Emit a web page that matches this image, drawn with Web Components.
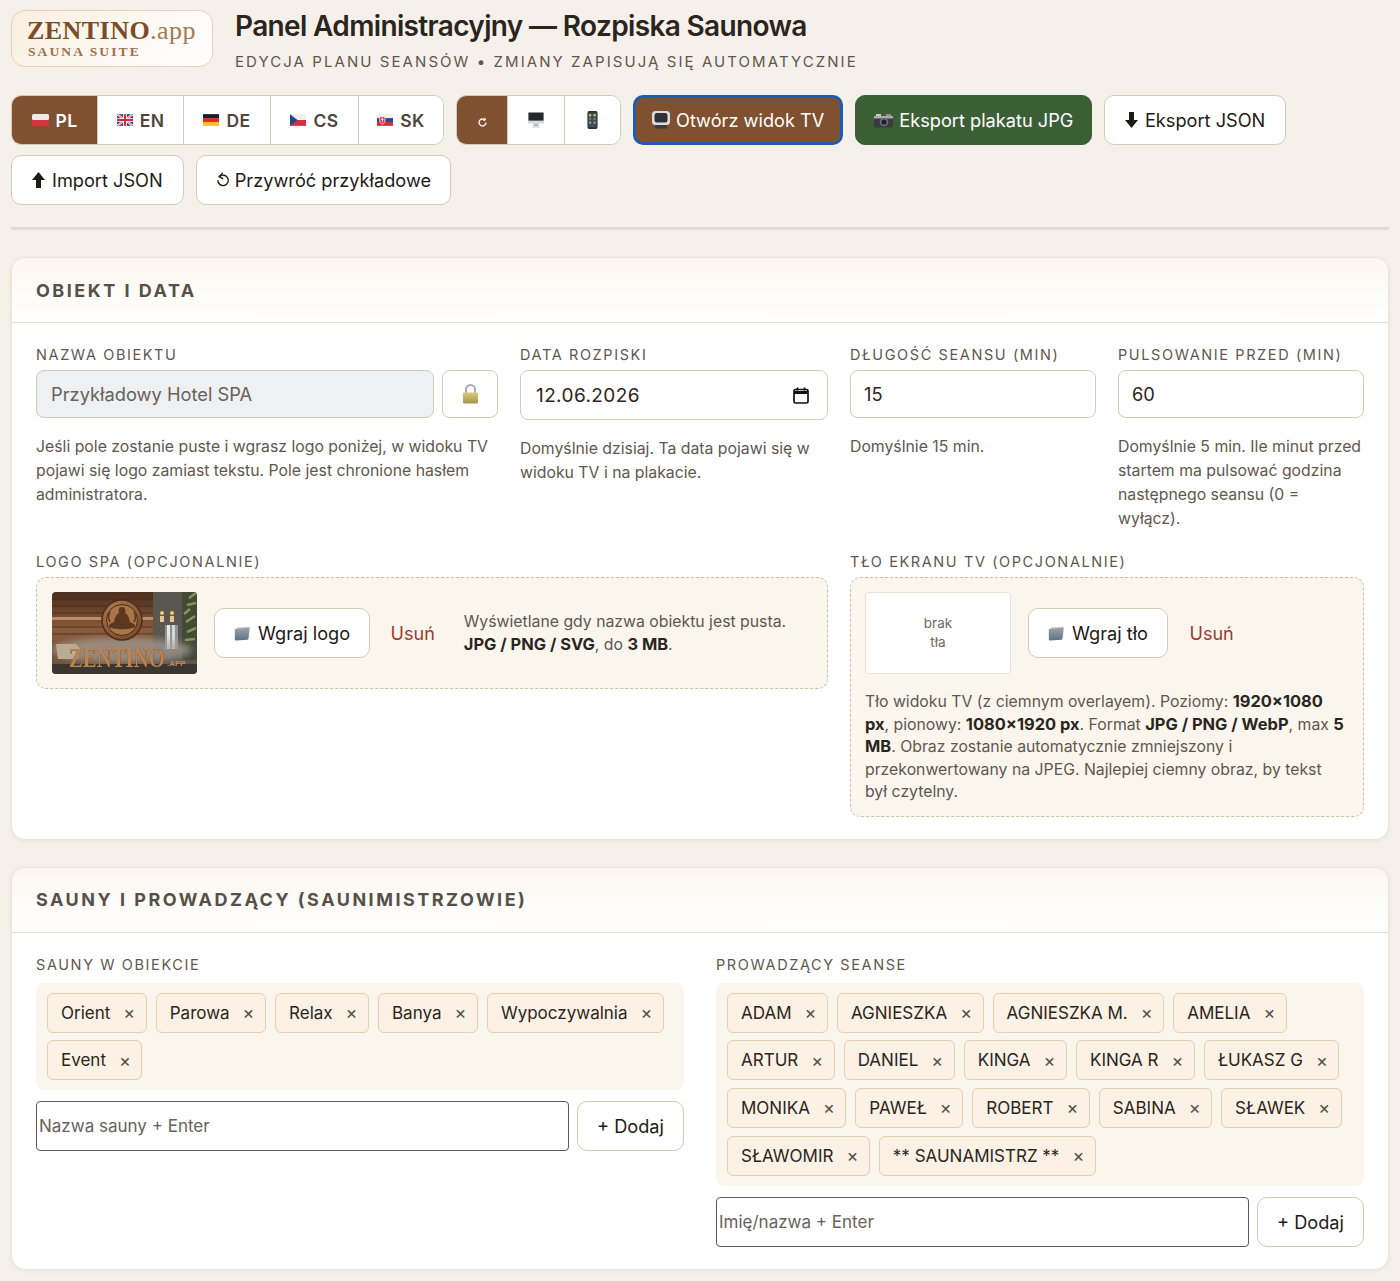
<!DOCTYPE html>
<html lang="pl">
<head>
<meta charset="utf-8">
<title>Panel Administracyjny</title>
<style>
  html, body { margin: 0; background: #f5f1ea; }
  body { font-family: Inter, "Liberation Sans", sans-serif; color: #2b2520; }
  b { font-weight: 700; color: #2b2520; font-size: 1.04em; line-height: 1; }
</style>
</head>
<body>
<admin-page>
  <page-header></page-header>
  <tool-bar>
    <seg-group>
      <seg-btn icon="pl" w="85" active>PL</seg-btn>
      <seg-btn icon="en" w="86">EN</seg-btn>
      <seg-btn icon="de" w="87">DE</seg-btn>
      <seg-btn icon="cs" w="88">CS</seg-btn>
      <seg-btn icon="sk" w="85">SK</seg-btn>
    </seg-group>
    <seg-group>
      <seg-btn icon="auto" w="50" active></seg-btn>
      <seg-btn icon="desktop" w="57"></seg-btn>
      <seg-btn icon="phone" w="56"></seg-btn>
    </seg-group>
    <act-btn kind="brown" icon="tv">Otwórz widok TV</act-btn>
    <act-btn kind="green" icon="camera">Eksport plakatu JPG</act-btn>
    <act-btn icon="down">Eksport JSON</act-btn>
    <act-btn icon="up" style="padding:0 20px">Import JSON</act-btn>
    <act-btn icon="undo" style="gap:5px;padding:0 19px">Przywróć przykładowe</act-btn>
  </tool-bar>
  <hr-line></hr-line>

  <form-card heading="Obiekt i data">
    <div style="display:grid;grid-template-columns:462px 308px 246px 246px;column-gap:22px;row-gap:22px">
      <form-field label="Nazwa obiektu">
        <div style="display:flex;gap:8px">
          <text-box locked style="flex:1">Przykładowy Hotel SPA</text-box>
          <lock-btn></lock-btn>
        </div>
        <span slot="help">Jeśli pole zostanie puste i wgrasz logo poniżej, w widoku TV pojawi się logo zamiast tekstu. Pole jest chronione hasłem administratora.</span>
      </form-field>
      <form-field label="Data rozpiski">
        <date-box>12.06.2026</date-box>
        <span slot="help">Domyślnie dzisiaj. Ta data pojawi się w widoku TV i na plakacie.</span>
      </form-field>
      <form-field label="Długość seansu (min)">
        <text-box>15</text-box>
        <span slot="help">Domyślnie 15 min.</span>
      </form-field>
      <form-field label="Pulsowanie przed (min)">
        <text-box>60</text-box>
        <span slot="help">Domyślnie 5 min. Ile minut przed startem ma pulsować godzina następnego seansu (0 = wyłącz).</span>
      </form-field>

      <form-field label="Logo SPA (opcjonalnie)" style="grid-column:span 2">
        <upload-box>
          <logo-thumb></logo-thumb>
          <act-btn small icon="folder">Wgraj logo</act-btn>
          <remove-link style="margin:0 12px 0 4px">Usuń</remove-link>
          <span slot="side">Wyświetlane gdy nazwa obiektu jest pusta.<br><b>JPG / PNG / SVG</b>, do <b>3 MB</b>.</span>
        </upload-box>
      </form-field>
      <form-field label="Tło ekranu TV (opcjonalnie)" style="grid-column:span 2">
        <upload-box>
          <empty-thumb>brak<br>tła</empty-thumb>
          <act-btn small icon="folder">Wgraj tło</act-btn>
          <remove-link style="margin-left:5px">Usuń</remove-link>
          <span slot="below">Tło widoku TV (z ciemnym overlayem). Poziomy: <b>1920×1080</b> <b>px</b>, pionowy: <b>1080×1920 px</b>. Format <b>JPG / PNG / WebP</b>, max <b>5</b> <b>MB</b>. Obraz zostanie automatycznie zmniejszony i przekonwertowany na JPEG. Najlepiej ciemny obraz, by tekst był czytelny.</span>
        </upload-box>
      </form-field>
    </div>
  </form-card>

  <form-card heading="Sauny i prowadzący (saunimistrzowie)">
    <div style="display:grid;grid-template-columns:1fr 1fr;column-gap:32px">
      <form-field label="Sauny w obiekcie" tight>
        <chip-list>
          <chip-item>Orient</chip-item><chip-item>Parowa</chip-item><chip-item>Relax</chip-item><chip-item>Banya</chip-item><chip-item>Wypoczywalnia</chip-item><chip-item>Event</chip-item>
        </chip-list>
        <add-row placeholder="Nazwa sauny + Enter"></add-row>
      </form-field>
      <form-field label="Prowadzący seanse" tight>
        <chip-list>
          <chip-item>ADAM</chip-item><chip-item>AGNIESZKA</chip-item><chip-item>AGNIESZKA M.</chip-item><chip-item>AMELIA</chip-item><chip-item>ARTUR</chip-item><chip-item>DANIEL</chip-item><chip-item>KINGA</chip-item><chip-item>KINGA R</chip-item><chip-item>ŁUKASZ G</chip-item><chip-item>MONIKA</chip-item><chip-item>PAWEŁ</chip-item><chip-item>ROBERT</chip-item><chip-item>SABINA</chip-item><chip-item>SŁAWEK</chip-item><chip-item>SŁAWOMIR</chip-item><chip-item>** SAUNAMISTRZ **</chip-item>
        </chip-list>
        <add-row placeholder="Imię/nazwa + Enter"></add-row>
      </form-field>
    </div>
  </form-card>
</admin-page>

<script>
// icons are drawn by hand, no emoji font here
const ICONS = {
  pl: `<svg width="17" height="12" viewBox="0 0 17 12"><rect width="17" height="6" rx="1.500" fill="#eeeaea"/><path d="M0 6h17v4.500a1.500 1.500 0 0 1-1.500 1.500h-14A1.500 1.500 0 0 1 0 10.500z" fill="#d8323f"/></svg>`,
  en: `<svg width="16" height="12" viewBox="0 0 15 11"><rect width="15" height="11" rx="1.500" fill="#2b3a83"/><path d="M0 0l15 11M15 0L0 11" stroke="#fff" stroke-width="2"/><path d="M0 0l15 11M15 0L0 11" stroke="#cf2b3c" stroke-width=".7"/><path d="M7.500 0v11M0 5.500h15" stroke="#fff" stroke-width="3.400"/><path d="M7.500 0v11M0 5.500h15" stroke="#cf2b3c" stroke-width="1.800"/></svg>`,
  de: `<svg width="16" height="12" viewBox="0 0 15 11"><rect width="15" height="3.700" fill="#1d1d1d"/><rect y="3.700" width="15" height="3.700" fill="#d62b2b"/><rect y="7.300" width="15" height="3.700" fill="#f3c225"/></svg>`,
  cs: `<svg width="16" height="12" viewBox="0 0 15 11"><rect width="15" height="5.500" fill="#f0eeee"/><rect y="5.500" width="15" height="5.500" fill="#d2303f"/><path d="M0 0l7 5.500L0 11z" fill="#21468f"/></svg>`,
  sk: `<svg width="16" height="12" viewBox="0 0 15 11"><rect width="15" height="3.700" fill="#f0eeee"/><rect y="3.700" width="15" height="3.700" fill="#27479a"/><rect y="7.300" width="15" height="3.700" fill="#d2303f"/><path d="M2.500 2.500h5v4c0 1.500-1.500 2.300-2.500 2.700-1-.4-2.500-1.200-2.500-2.700z" fill="#d2303f" stroke="#fff" stroke-width=".7"/><path d="M5 3.500v4M3.800 5h2.400" stroke="#fff" stroke-width=".8"/></svg>`,
  auto: `<svg width="11" height="11" viewBox="0 0 11 11" fill="none" stroke="#fff" stroke-width="1.300" style="margin-top:4px"><path d="M9 5.500a3.500 3.500 0 1 1-1.100-2.600"/><path d="M8.200 1v2.200H6" stroke-width="1"/></svg>`,
  desktop: `<svg width="18" height="16" viewBox="0 0 17 16"><rect x=".5" y="0" width="16" height="11.500" rx="1" fill="#d5d7da"/><rect x="1" y=".6" width="15" height="8" fill="#26282c"/><rect x="6" y="11.500" width="5" height="3" fill="#b5b8bc"/><rect x="4.500" y="14.300" width="8" height="1.200" rx=".5" fill="#d6d8da"/></svg>`,
  phone: `<svg width="11" height="18" viewBox="0 0 10 17"><rect x=".2" y="0" width="9.600" height="17" rx="1.800" fill="#2c2e32"/><rect x="1" y="1.500" width="8" height="14" fill="#3f4f4a"/><g fill="#d9c68a"><rect x="1.800" y="3" width="2" height="2"/><rect x="6" y="3" width="2" height="2"/></g><g fill="#c5575a"><rect x="1.800" y="6.500" width="2" height="2"/><rect x="6" y="6.500" width="2" height="2"/></g><g fill="#7aa3c9"><rect x="1.800" y="10" width="2" height="2"/><rect x="6" y="10" width="2" height="2"/></g></svg>`,
  tv: `<svg width="18" height="18" viewBox="0 0 18 18"><rect x="0" y="0" width="18" height="14" rx="3.500" fill="#dcdcde"/><rect x="2.500" y="2" width="13" height="9.500" rx="2.500" fill="#2f3136"/><path d="M3.500 14h11l1 3.500h-13z" fill="#3c3d41"/></svg>`,
  camera: `<svg width="19" height="15" viewBox="0 0 19 15"><rect x="0" y="3" width="19" height="11.500" rx="1.500" fill="#3a3b3e"/><rect x="2" y="1" width="5" height="3" fill="#c5c6c8"/><rect x="12" y="1" width="5" height="3" fill="#8d8e91"/><rect x="0" y="3" width="19" height="2.500" fill="#a9aaad"/><circle cx="10" cy="9" r="4.300" fill="#6f7175"/><circle cx="10" cy="9" r="2.600" fill="#1e2024"/></svg>`,
  down: `<svg width="13" height="16" viewBox="0 0 13 16"><path d="M4 0h5v8h4l-6.500 8L0 8h4z" fill="#1e1a16"/></svg>`,
  up: `<svg width="13" height="16" viewBox="0 0 13 16"><path d="M4 16h5V8h4L6.500 0 0 8h4z" fill="#1e1a16"/></svg>`,
  undo: `<svg width="14" height="18" viewBox="0 0 15 17" fill="none" stroke="#1e1a16" stroke-width="1.500"><path d="M3.800 4.800a5.600 5.600 0 1 1-1.800 3.900"/><path d="M7.200 1L3.400 4.900l4.200 2.400"/></svg>`,
  folder: `<svg width="16" height="15" viewBox="0 0 17 15"><defs><linearGradient id="fl" x1="0" y1="0" x2="0" y2="1"><stop offset="0" stop-color="#9aa6b0"/><stop offset="1" stop-color="#5f7080"/></linearGradient></defs><path d="M3 1L16 .3c.6 0 1 .4 1 1L16 12H3z" fill="#c8ced2"/><path d="M.8 3.500c0-.6.4-1 1-1.100l13.500-1c.7 0 1 .4 1 1L15.300 13c-.1.700-.5 1-1.100 1.100L2 15c-.7 0-1.100-.4-1.100-1z" fill="url(#fl)"/></svg>`,
  lock: `<svg width="17" height="20" viewBox="0 0 17 20"><defs><linearGradient id="lk" x1="0" y1="0" x2="0" y2="1"><stop offset="0" stop-color="#d9c97f"/><stop offset="1" stop-color="#a8964a"/></linearGradient></defs><path d="M4 9V5.500a4.500 4.500 0 0 1 9 0V9" fill="none" stroke="#a9acb2" stroke-width="2"/><rect x="1" y="8.500" width="15" height="11" rx="1" fill="url(#lk)"/></svg>`
};

// little helper so every element looks the same in its class
class ShadowEl extends HTMLElement {
  render(css, html) {
    if (!this.shadowRoot) this.attachShadow({ mode: 'open' });
    this.shadowRoot.innerHTML = `<style>${css}</style>${html}`;
  }
}

class AdminPage extends ShadowEl {
  connectedCallback() {
    this.render(`:host{display:block;padding:10px 11px 12px}`, `<slot></slot>`);
  }
}

class PageHeader extends ShadowEl {
  connectedCallback() {
    this.render(`
      :host{display:flex;gap:22px;align-items:flex-start;margin-bottom:23px}
      .brand{width:200px;height:55px;box-sizing:content-box;border:1px solid #e6d3b5;border-radius:14px;background:linear-gradient(135deg,#f9efdf,#fff);font-family:"Liberation Serif",serif;display:flex;flex-direction:column;justify-content:center}
      .name{font-size:26px;line-height:26px;font-weight:700;color:#7a4c2a;margin:0 0 0 15px;letter-spacing:.45px}
      .name span{font-weight:400;color:#a07a55}
      .sub{font-size:13.500px;line-height:14px;margin:1px 0 0 16px;font-weight:700;letter-spacing:2.100px;color:#9b6f4b}
      h1{margin:0;font-size:28px;line-height:32px;font-weight:600;letter-spacing:-.65px;color:#2b2520}
      p{margin:10px 0 0;font-size:15px;line-height:20px;letter-spacing:2.070px;text-transform:uppercase;color:#5f574e}
    `, `
      <div class="brand"><div class="name">ZENTINO<span>.app</span></div><div class="sub">SAUNA SUITE</div></div>
      <div><h1>Panel Administracyjny — Rozpiska Saunowa</h1><p>Edycja planu seansów • Zmiany zapisują się automatycznie</p></div>
    `);
  }
}

class ToolBar extends ShadowEl {
  connectedCallback() {
    this.render(`:host{display:flex;flex-wrap:wrap;gap:10px 12px;align-items:flex-start}`, `<slot></slot>`);
  }
}

class SegGroup extends ShadowEl {
  connectedCallback() {
    this.render(`:host{display:inline-flex;border:1px solid #d4cab8;border-radius:10px;overflow:hidden;background:#fff;height:48px}`, `<slot></slot>`);
  }
}

class SegBtn extends ShadowEl {
  connectedCallback() {
    const active = this.hasAttribute('active');
    this.render(`
      :host{display:flex;align-items:center;justify-content:center;gap:7px;box-sizing:border-box;height:48px;width:${this.getAttribute('w')}px;font-size:17.500px;font-weight:600;letter-spacing:.4px;background:${active ? '#7f5130' : '#fff'};color:${active ? '#fff' : '#4d463e'};border-left:1px solid #d4cab8}
      :host(:first-child){border-left:0}
      svg{display:block}
    `, `${ICONS[this.getAttribute('icon')] || ''}<slot></slot>`);
  }
}

class ActBtn extends ShadowEl {
  connectedCallback() {
    const kind = this.getAttribute('kind');
    const small = this.hasAttribute('small');
    const skin = kind === 'brown'
      ? 'background:#7f5130;color:#fff;border:3px solid #1f5bb0;padding:0 16px;gap:6px;'
      : kind === 'green'
        ? 'background:#3c5f36;color:#fff;border:1px solid #3c5f36;padding:0 18px;gap:6px;'
        : small
          ? 'background:#fff;color:#1e1a16;border:1px solid #d4cab8;padding:0 18.500px 0 19px;gap:8px;'
          : 'background:#fff;color:#1e1a16;border:1px solid #d4cab8;padding:0 19.500px;gap:7px;';
    this.render(`
      :host{display:inline-flex;align-items:center;justify-content:center;box-sizing:border-box;height:50px;border-radius:10px;font-size:18.200px;white-space:nowrap;${skin}}
      svg{display:block}
    `, `${ICONS[this.getAttribute('icon')] || ''}<slot></slot>`);
  }
}

class HrLine extends ShadowEl {
  connectedCallback() {
    this.render(`:host{display:block;height:3px;background:#e3ddd0;margin:22px 0 27px}`, ``);
  }
}

class FormCard extends ShadowEl {
  connectedCallback() {
    this.render(`
      :host{display:block;background:#fff;border:1px solid #eae4d8;border-radius:14px;box-shadow:0 1px 4px rgba(80,60,30,.08);margin-bottom:27px;overflow:hidden}
      h2{margin:0;height:65px;box-sizing:border-box;padding:0 24px;display:flex;align-items:center;font-size:18px;font-weight:700;letter-spacing:2.500px;text-transform:uppercase;color:#55504a;background:linear-gradient(180deg,#fbf7ef,#fff);border-bottom:1px solid #e5dfd3}
      .body{padding:23px 24px 22px}
    `, `<h2>${this.getAttribute('heading')}</h2><div class="body"><slot></slot></div>`);
  }
}

class FormField extends ShadowEl {
  connectedCallback() {
    const tight = this.hasAttribute('tight');
    this.render(`
      :host{display:block;min-width:0}
      label{display:block;font-size:14.500px;line-height:18px;letter-spacing:1.600px;text-transform:uppercase;color:#5f574e;margin-bottom:${tight ? 9 : 6}px}
      .help{font-size:15.800px;line-height:24px;color:#5f574e}
      ::slotted([slot=help]){display:block;margin-top:17px}
    `, `<label>${this.getAttribute('label')}</label><slot></slot><div class="help"><slot name="help"></slot></div>`);
  }
}

class TextBox extends ShadowEl {
  connectedCallback() {
    const locked = this.hasAttribute('locked');
    this.render(`
      :host{display:flex;align-items:center;box-sizing:border-box;height:48px;padding:0 ${locked ? 14 : 13}px;border:1px solid #d4cab8;border-radius:8px;font-size:18.300px;background:${locked ? '#eff0f2' : '#fff'};color:${locked ? '#66625c' : '#2b2520'}}
    `, `<slot></slot>`);
  }
}

class DateBox extends ShadowEl {
  connectedCallback() {
    this.render(`
      :host{display:flex;align-items:center;justify-content:space-between;box-sizing:border-box;height:50px;padding:0 18px 0 15px;border:1px solid #d4cab8;border-radius:8px;font-size:19px;letter-spacing:.4px;background:#fff;color:#2b2520}
      svg{display:block}
    `, `<slot></slot><svg width="16" height="17" viewBox="0 0 16 17" fill="none" stroke="#111" stroke-width="1.700"><rect x="1" y="2.500" width="14" height="13.500" rx="1.500"/><path d="M1 5.500h14" stroke-width="3"/><path d="M4.500 .5v3M11.500 .5v3"/></svg>`);
  }
}

class LockBtn extends ShadowEl {
  connectedCallback() {
    this.render(`:host{display:flex;align-items:center;justify-content:center;width:56px;height:48px;box-sizing:border-box;border:1px solid #d4cab8;border-radius:8px;background:#fff}`, ICONS.lock);
  }
}

class UploadBox extends ShadowEl {
  connectedCallback() {
    this.render(`
      :host{display:block;box-sizing:border-box;border:1px dashed #cdbfa6;border-radius:10px;background:#faf6ee;padding:14px 15px 14px}
      .row{display:flex;align-items:center;gap:17px}
      .side{font-size:15.800px;line-height:23px;color:#5f574e;flex:1}
      .below{font-size:15.800px;line-height:22.500px;color:#5f574e}
      ::slotted([slot=below]){display:block;margin:17px 0 -2px -1px}
    `, `<div class="row"><slot></slot><div class="side"><slot name="side"></slot></div></div><div class="below"><slot name="below"></slot></div>`);
  }
}

class LogoThumb extends ShadowEl {
  connectedCallback() {
    this.render(`:host{display:block;width:145px;height:82px;border-radius:4px;overflow:hidden;flex:none} svg{display:block} .zt{filter:drop-shadow(.8px .8px 0 #3d2312)}`, `
      <svg width="145" height="82" viewBox="0 0 145 82">
        <defs>
          <linearGradient id="wood" x1="0" y1="0" x2="0" y2="1"><stop offset="0" stop-color="#4a2d1e"/><stop offset=".45" stop-color="#8a5a3a"/><stop offset="1" stop-color="#6a5040"/></linearGradient>
          <radialGradient id="med" cx=".4" cy=".35" r=".75"><stop offset="0" stop-color="#c08c5e"/><stop offset="1" stop-color="#6e4227"/></radialGradient>
          <filter id="soft"><feGaussianBlur stdDeviation="3"/></filter>
          <filter id="soft1"><feGaussianBlur stdDeviation=".4"/></filter>
        </defs>
        <rect width="145" height="82" fill="url(#wood)"/>
        <g stroke="#3a2216" stroke-width=".8" opacity=".8"><path d="M0 7h101M0 14h101M0 21h101M0 35h101M0 42h101"/></g>
        <rect x="0" y="25" width="101" height="3" fill="#d7a67a" opacity=".7"/>
        <rect x="101" y="0" width="44" height="72" fill="#5a5650"/>
        <g filter="url(#soft1)">
          <rect x="130" y="0" width="15" height="68" fill="#454a38"/>
          <path d="M134 30l9-6M135 40l9-4M133 48l10-1M137 6l7-5M135 13l9-2M132 22l6-5" stroke="#7d9a52" stroke-width="2.500"/>
          <rect x="113" y="33" width="13" height="24" fill="#8e9290"/>
          <rect x="115" y="33" width="3" height="24" fill="#e6e8e6"/>
          <rect x="120" y="33" width="3" height="24" fill="#d5d8d6"/>
          <rect x="108" y="24" width="4" height="6" fill="#e4c69a"/><rect x="118" y="24" width="4" height="6" fill="#e4c69a"/>
          <circle cx="110" cy="21" r="2" fill="#f5c474"/><circle cx="120" cy="21" r="2" fill="#f5c474"/>
        </g>
        <ellipse cx="70" cy="58" rx="70" ry="13" fill="#a8a49c" opacity=".65" filter="url(#soft)"/>
        <path d="M4 52h20l5 6-3 9H6z" fill="#b9ab96" filter="url(#soft1)"/>
        <circle cx="70" cy="28" r="20" fill="url(#med)" stroke="#4f2e1a" stroke-width="1.500"/>
        <circle cx="70" cy="28" r="15.500" fill="#a87648" stroke="#4a2a17" stroke-width="1"/>
        <path d="M70 15c3 0 4 3 3 6 4 2 4 6 5 9 3 1 6 3 5 5-5 3-21 3-26 0-1-2 2-4 5-5 1-3 1-7 5-9-1-3 0-6 3-6z" fill="#5d3820"/>
        <path d="M58 20c-2 4-2 7 0 10M82 20c2 4 2 7 0 10" stroke="#5d3820" stroke-width="1.500" fill="none"/>
        <rect x="0" y="72" width="145" height="10" fill="#3b3632"/>
        <text class="zt" transform="translate(17 75) scale(.77 1)" font-family="Liberation Serif, serif" font-size="27" font-weight="700" fill="#bd8350">ZENTINO</text>
        <text x="115" y="74" font-family="Liberation Sans, sans-serif" font-size="8" font-weight="700" fill="#c48a55">.APP</text>
      </svg>`);
  }
}

class EmptyThumb extends ShadowEl {
  connectedCallback() {
    this.render(`:host{display:flex;align-items:center;justify-content:center;text-align:center;width:146px;height:82px;box-sizing:border-box;border:1px solid #e8e2d6;border-radius:4px;background:#fff;font-size:13.500px;line-height:19px;color:#6f6860;flex:none;margin-left:-1px}`, `<div><slot></slot></div>`);
  }
}

class RemoveLink extends ShadowEl {
  connectedCallback() {
    this.render(`:host{display:inline-block;font-size:18px;color:#9b3b2e;white-space:nowrap}`, `<slot></slot>`);
  }
}

class ChipList extends ShadowEl {
  connectedCallback() {
    this.render(`:host{display:flex;flex-wrap:wrap;gap:7.700px 9px;padding:10px 11px;background:#faf6ee;border-radius:8px}`, `<slot></slot>`);
  }
}

class ChipItem extends ShadowEl {
  connectedCallback() {
    this.render(`
      :host{display:inline-flex;align-items:center;gap:13px;box-sizing:border-box;height:40px;padding:0 10.500px 0 13px;background:#fbf1e4;border:1px solid #e3d0ae;border-radius:6px;font-size:17px;color:#2b2520;white-space:nowrap}
      i{font-style:normal;font-size:18px;color:#55504a}
    `, `<slot></slot><i>×</i>`);
  }
}

class AddRow extends ShadowEl {
  connectedCallback() {
    this.render(`
      :host{display:flex;gap:8px;margin-top:11px}
      input{flex:1;min-width:0;height:50px;box-sizing:border-box;border:1px solid #5a5a5a;border-radius:4px;padding:0 2px;font:17px Inter,"Liberation Sans",sans-serif;background:#fff}
      input::placeholder{color:#66625c;opacity:1}
      button{width:107px;height:50px;border:1px solid #d4cab8;border-radius:10px;background:#fff;font:18.200px Inter,"Liberation Sans",sans-serif;color:#1e1a16}
    `, `<input placeholder="${this.getAttribute('placeholder')}"><button>+ Dodaj</button>`);
  }
}

customElements.define('admin-page', AdminPage);
customElements.define('page-header', PageHeader);
customElements.define('tool-bar', ToolBar);
customElements.define('seg-group', SegGroup);
customElements.define('seg-btn', SegBtn);
customElements.define('act-btn', ActBtn);
customElements.define('hr-line', HrLine);
customElements.define('form-card', FormCard);
customElements.define('form-field', FormField);
customElements.define('text-box', TextBox);
customElements.define('date-box', DateBox);
customElements.define('lock-btn', LockBtn);
customElements.define('upload-box', UploadBox);
customElements.define('logo-thumb', LogoThumb);
customElements.define('empty-thumb', EmptyThumb);
customElements.define('remove-link', RemoveLink);
customElements.define('chip-list', ChipList);
customElements.define('chip-item', ChipItem);
customElements.define('add-row', AddRow);
</script>
</body>
</html>
